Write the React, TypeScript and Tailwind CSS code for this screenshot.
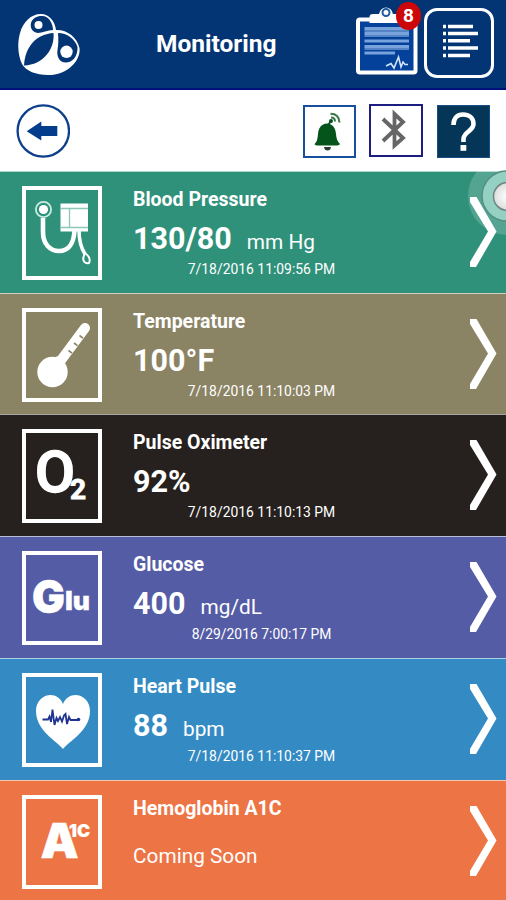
import React from 'react';

interface Reading {
  title: string;
  value?: string;
  unit?: string;
  date?: string;
  note?: string;
  className: string;
  icon: React.ReactNode;
}

const PressureIcon = () => (
  <g>
    <circle cx="21.5" cy="23.5" r="7.6" fill="none" stroke="#c9ece2" strokeWidth="1.8" />
    <circle cx="21.5" cy="23.5" r="4.6" fill="#fff" />
    <path d="M21 32V46C21 58 28 65 37 65C46 65 52 58 52.5 44" fill="none" stroke="#fff" strokeWidth="4.6" />
    <path d="M57 44C57 54 59 62 63 68" fill="none" stroke="#fff" strokeWidth="3.6" />
    <path d="M63 67C67 70 69 73 67 77C63 78 60.5 75 61.5 71Z" fill="none" stroke="#fff" strokeWidth="2" />
    <path d="M38.5 17.5H66V45.5H38.5Z" fill="#fff" />
    <path d="M38.5 22.5H66M38.5 41.5H66M47.5 22.5V41.5" stroke="#8cc8b8" strokeWidth="1.3" />
  </g>
);

const ThermometerIcon = () => (
  <g>
    <circle cx="30.5" cy="64" r="15.2" fill="#fff" />
    <path d="M34 59L63 20" stroke="#fff" strokeWidth="10" strokeLinecap="round" />
    <path d="M35 48L44 58L40 65L28 56Z" fill="#fff" />
    <path d="M46.5 42.5L50 45.2M52 35L55.5 37.7M57.5 27.5L61 30.2" stroke="#8b8464" strokeWidth="1.6" />
  </g>
);

const OxygenIcon = () => (
  <text x="13" y="62.5" fill="#fff" fontFamily="Roboto, sans-serif" fontSize="58" fontWeight="500" stroke="#fff" strokeWidth="1.6">
    O<tspan x="48" y="70" fontSize="28" fontWeight="700" strokeWidth="0.9">2</tspan>
  </text>
);

const GlucoseIcon = () => (
  <g fill="#fff" stroke="#fff" fontFamily="Inter, sans-serif" fontWeight="900">
    <text x="10" y="61.5" fontSize="45" strokeWidth="0.5" textLength="33" lengthAdjust="spacingAndGlyphs">G</text>
    <text x="43" y="58.5" fontSize="26" strokeWidth="0.3" textLength="25" lengthAdjust="spacingAndGlyphs">lu</text>
  </g>
);

const HeartIcon = () => (
  <g>
    <path d="M41 76C35 68 14 58 14 38C14 21 35 16 41 31C47 16 68 21 68 38C68 58 47 68 41 76Z" fill="#fff" />
    <path d="M20.5 46.5H26L27.5 43.5L29 49L30.5 36.5L32.5 52L34.5 45L36 48L38 44L40 48.5L42 42.5L43.5 41L45 51L47 44L48.5 47H57" fill="none" stroke="#20338f" strokeWidth="1.8" />
    <circle cx="56.5" cy="46.5" r="1.8" fill="#20338f" />
  </g>
);

const HemoglobinIcon = () => (
  <text x="18.5" y="62.5" fill="#fff" fontFamily="Inter, sans-serif" fontSize="48" fontWeight="900" stroke="#fff" strokeWidth="0.5">
    A<tspan x="47" y="41.5" fontSize="17.5" strokeWidth="0.2">1C</tspan>
  </text>
);

const readings: Reading[] = [
  { title: 'Blood Pressure', value: '130/80', unit: 'mm Hg', date: '7/18/2016 11:09:56 PM', className: 'h-[122px] bg-[#2f917a]', icon: <PressureIcon /> },
  { title: 'Temperature', value: '100°F', date: '7/18/2016 11:10:03 PM', className: 'h-[121px] bg-[#8b8464]', icon: <ThermometerIcon /> },
  { title: 'Pulse Oximeter', value: '92%', date: '7/18/2016 11:10:13 PM', className: 'h-[122px] bg-[#26211e]', icon: <OxygenIcon /> },
  { title: 'Glucose', value: '400', unit: 'mg/dL', date: '8/29/2016 7:00:17 PM', className: 'h-[122px] bg-[#555ca6]', icon: <GlucoseIcon /> },
  { title: 'Heart Pulse', value: '88', unit: 'bpm', date: '7/18/2016 11:10:37 PM', className: 'h-[122px] bg-[#348bc4]', icon: <HeartIcon /> },
  { title: 'Hemoglobin A1C', note: 'Coming Soon', className: 'h-[120px] bg-[#ed7444]', icon: <HemoglobinIcon /> },
];

const Logo = () => (
  <svg className="w-16 h-16" viewBox="16 10 64 64">
    {/* white body */}
    <path d="M41 13C49 13 55 20 56 29C67 28.5 77 36 79.5 47C81 58 69 74 48 74C36 74 26 70 22 63C18 54 17 43 20 32C23 21 31 13 41 13Z" fill="#fff" />
    {/* left head */}
    <path d="M31 22C33 15 42 13.5 47 16.5C51 19 53 25 53 29C48 29 42 32 38 32C32 31 30 27 31 22Z" fill="#033575" />
    <circle cx="38.5" cy="24" r="4" fill="#fff" />
    {/* leaf */}
    <path d="M24 64.5C25 45 37 33 53.5 32C55 48 43 64 24 64.5Z" fill="#033575" />
    {/* right head */}
    <path d="M58 32C67 32 75 38 77.5 46C78 57 71 61.5 66 61.5C59 61.5 56.5 55 57.5 49C58.5 43 58.5 38 58 32Z" fill="#033575" />
    <circle cx="66.5" cy="50.8" r="6.2" fill="#fff" />
  </svg>
);

const ClipboardIcon = () => (
  <svg className="w-[62px] h-[70px]" viewBox="356 6 62 70">
    <rect x="358" y="19.5" width="57.5" height="53" rx="2" fill="#03419b" stroke="#fff" strokeWidth="4" />
    <path d="M364.5 28.5H409M364.5 33.5H409M364.5 41H409M364.5 46.5H409M364.5 53H395" stroke="#78a2dc" strokeWidth="3" />
    <path d="M364.5 31H409M364.5 36H409M364.5 49H409" stroke="#a9c6ee" strokeWidth="1.2" />
    <path d="M386 66L391 63.5L394 68L398.5 57L401 67L403 62L405 64.5H408" fill="none" stroke="#d5e5fa" strokeWidth="1.6" />
    <path d="M369.5 23V17Q369.5 14 373 14H379Q380.5 7.5 386 7.5Q391.5 7.5 393 14H397Q401 14 401 17V23Z" fill="#fff" />
    <circle cx="386" cy="12.5" r="3.5" fill="#fff" stroke="#1d5c9e" strokeWidth="2" />
  </svg>
);

const Header = () => (
  <header className="flex h-[90px] border-b-2 border-[#02107a] bg-[#033575] pl-4">
    <div className="w-[120px] pt-[11px]"><Logo /></div>
    <h1 className="w-[220px] pl-5 pt-7 text-[24.5px] leading-8 font-bold">Monitoring</h1>
    <div className="relative h-[76px] w-[62px] pt-1.5">
      <ClipboardIcon />
      <span className="absolute left-10 top-[2px] h-7 w-[25px] rounded-[50%] bg-[#cd0709] text-center text-[19px] leading-7 font-bold">8</span>
    </div>
    <button aria-label="Menu" className="mt-2 ml-1.5 h-[70px] w-[70px] rounded-[13px] border-[3px] border-white">
      <svg className="h-16 w-16" viewBox="427 11 64 64">
        <path d="M443 26.5H446M443 33.5H446M443 40.7H446M443 48H446M443 55.5H446M448 26.5H473M448 33.5H478M448 40.7H470M448 48H478M448 55.5H470" stroke="#fff" strokeWidth="3.6" />
      </svg>
    </button>
  </header>
);

const Toolbar = () => (
  <nav className="flex h-[81px] bg-white pl-4 pt-3.5">
    <button aria-label="Back" className="mr-[233px] h-[54px] w-[54px]">
      <svg className="h-[54px] w-[54px]" viewBox="0 0 54 54">
        <circle cx="27.3" cy="27" r="25.7" fill="none" stroke="#0d3f8c" strokeWidth="2.3" />
        <path d="M10.7 27.3L25.3 17.5V22H41.3V32H25.3V36.5Z" fill="#033d8b" />
      </svg>
    </button>
    <button aria-label="Alerts" className="mt-px h-[53px] w-[53px] border-2 border-[#174f9c]">
      <svg className="h-[49px] w-[49px]" viewBox="305 107 49 49">
        <path d="M314.5 144C317 142 317.5 139 318 134C318.5 128 321 124 327 123.5C333 124 335.5 128 336 134C336.5 139 337.5 141.5 340 144Q339 145.5 335 145.5H319Q315 145.5 314.5 144Z" fill="#04541c" />
        <path d="M328 125L331.5 120.5" stroke="#04541c" strokeWidth="2" />
        <circle cx="331" cy="121" r="2" fill="#04541c" />
        <path d="M331 117.5Q335 117.5 335 121.5M330.5 113.8Q339 113.8 339.5 122.5" fill="none" stroke="#3a7848" strokeWidth="2" />
        <path d="M324 147H331Q330.5 150.5 327.5 150.5Q324.5 150.5 324 147Z" fill="#283e32" />
      </svg>
    </button>
    <button aria-label="Bluetooth" className="ml-[13px] h-[53px] w-[54px] border-2 border-[#1b1d80]">
      <svg className="h-[49px] w-[50px]" viewBox="371 106 50 49">
        <path d="M383 119L403 138L394.5 145.5V114L403 122L383 141" fill="none" stroke="#666" strokeWidth="3.8" />
      </svg>
    </button>
    <button aria-label="Help" className="ml-[14px] mt-px h-[53px] w-[53px] border border-[#174e86] bg-[#053557]">
      <svg className="h-[51px] w-[51px]" viewBox="438 106 51 51">
        <path d="M453.5 125C453.5 118 457.5 114.5 463 114.5C469 114.5 473.5 118 473.5 124C473.5 131 463.5 132 463.5 139V142" fill="none" stroke="#fff" strokeWidth="4.6" />
        <rect x="460.5" y="145" width="5.8" height="5.8" fill="#fff" />
      </svg>
    </button>
  </nav>
);

const ReadingRow: React.FC<{ reading: Reading }> = ({ reading }) => (
  <li className={`flex border-t border-white/60 pl-[22px] ${reading.className}`}>
    <div className="mt-[14px] h-[94px] w-20 shrink-0 border-4 border-white">
      <svg className="h-[86px] w-[72px]" viewBox="4 4 72 86">{reading.icon}</svg>
    </div>
    <div className="ml-[31px] w-[257px] pt-[15px]">
      <h2 className="text-[19.5px] leading-[25px] font-bold">{reading.title}</h2>
      {reading.note ? (
        <p className="mt-[21px] text-[20.8px] leading-7">{reading.note}</p>
      ) : (
        <>
          <p className="mt-[9px] flex h-9 items-baseline gap-[15px] leading-9">
            <span className="text-[30.5px] font-bold">{reading.value}</span>
            <span className="text-[20.8px]">{reading.unit}</span>
          </p>
          <p className="mt-0.5 text-center text-[13.9px] leading-5">{reading.date}</p>
        </>
      )}
    </div>
    <svg className="ml-[78px] mt-[23px] h-[74px] w-[30px] shrink-0" viewBox="468 195 30 74">
      <path d="M470 197H476.5L496.5 231.5L476 267H470V262L488 231.5L470 202Z" fill="#fff" />
    </svg>
  </li>
);

export default function App() {
  return (
    <main className="relative h-[900px] w-[506px] overflow-hidden font-['Roboto',sans-serif] text-white">
      <Header />
      <Toolbar />
      <ul>
        {readings.map((reading) => <ReadingRow key={reading.title} reading={reading} />)}
      </ul>
      {/* floating assist button, half off the right edge */}
      <svg className="absolute left-[466px] top-[156px] h-[82px] w-10" viewBox="466 156 40 82">
        <defs>
          <radialGradient id="knob">
            <stop offset="0" stopColor="#fff" />
            <stop offset="1" stopColor="#dcdede" />
          </radialGradient>
        </defs>
        <circle cx="507" cy="196" r="39" fill="#fff" fillOpacity="0.18" />
        <circle cx="507" cy="196" r="25" fill="#94d1c3" stroke="#548f82" strokeWidth="1.5" />
        <circle cx="507.5" cy="196.5" r="14" fill="url(#knob)" stroke="#738481" strokeWidth="1.5" />
      </svg>
    </main>
  );
}
